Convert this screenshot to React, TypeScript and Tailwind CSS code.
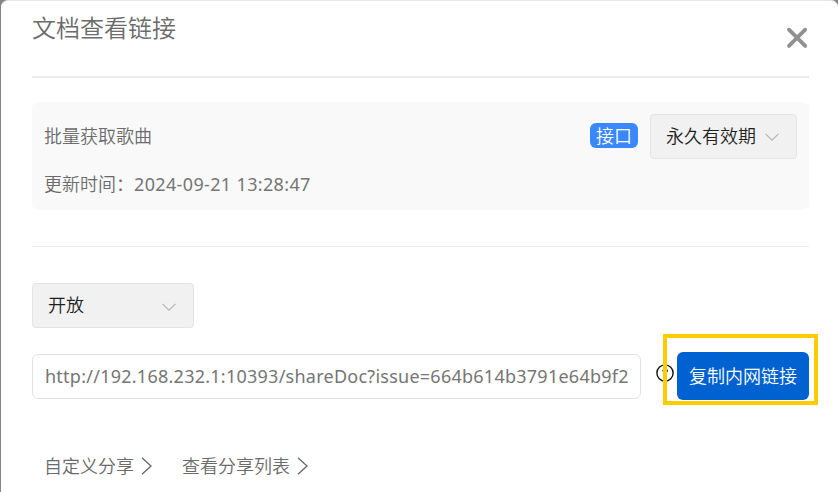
import React from "react";

function Chevron({ className = "" }: { className?: string }) {
  return (
    <svg className={`h-2 w-3.5 shrink-0 ${className}`} viewBox="0 0 14 8" fill="none" stroke="#b4b4b4" strokeWidth="1.1">
      <path d="M.5.8 7 7.2 13.5.8" />
    </svg>
  );
}

function ShareLink({ label }: { label: string }) {
  return (
    <a className="flex h-6 items-center gap-[7px]">
      <span className="leading-6">{label}</span>
      <svg className="h-[18px] w-[12px]" viewBox="0 0 12 18" fill="none" stroke="#666" strokeWidth="1.3">
        <path d="M1 .8 10 9 1 17.2" />
      </svg>
    </a>
  );
}

export default function App() {
  return (
    <div className="h-[492px] w-[838px] overflow-hidden bg-[#858585] pl-px font-['Noto_Sans','Noto_Sans_CJK_SC',sans-serif] text-[18px] font-[350] text-[#6b6b6b]">
      <div className="flex h-[510px] flex-col rounded-[7px] border-t border-[#e8e8e8] bg-white pr-[29px] pl-[31px]">
        <header className="flex h-[77px] shrink-0 justify-between border-b-2 border-[#ebebeb]">
          <h1 className="mt-[9px] h-9 text-[24px] leading-9">文档查看链接</h1>
          <button aria-label="关闭" className="mt-[26px] mr-[1px] h-[22px] w-[22px]">
            <svg viewBox="0 0 22 22" fill="none" stroke="#909090" strokeWidth="3.8" strokeLinecap="round">
              <path d="m3 2.7 16.2 16.2M19.2 2.7 3 18.9" />
            </svg>
          </button>
        </header>

        <section className="mt-6 flex h-[108px] shrink-0 flex-col rounded-md bg-[#f9f9f9] px-3 pt-3">
          <div className="flex h-[45px] items-center">
            <span className="-mt-0.5 leading-6">批量获取歌曲</span>
            <span className="-mt-0.5 mr-3 ml-auto flex h-[25px] w-12 items-center justify-center rounded-md bg-[#3a87ff] leading-none text-white">接口</span>
            <button className="flex h-[45px] w-[147px] items-center rounded border border-[#e4e4e4] bg-[#f1f1f1] pl-[15px] text-[#1f1f1f]">
              <span>永久有效期</span>
              <Chevron className="mt-px ml-[9px]" />
            </button>
          </div>
          <div className="mt-[11px] flex h-7 items-center leading-7">
            <span>更新时间：</span>
            <span className="font-normal tracking-[0.35px] text-[#757575]">2024-09-21 13:28:47</span>
          </div>
        </section>

        <hr className="mt-9 shrink-0 border-[#ebebeb]" />

        <button className="mt-9 flex h-[45px] w-[162px] shrink-0 items-center justify-between rounded border border-[#e4e4e4] bg-[#f1f1f1] pr-[17px] pl-[15px] text-[#1f1f1f]">
          <span>开放</span>
          <Chevron className="mt-[3px]" />
        </button>

        <div className="mt-6 flex h-12 shrink-0 items-center">
          <div className="flex h-[45px] w-[609px] items-center overflow-hidden rounded-md border border-[#e2e2e2] pl-3 font-normal tracking-[0.25px] whitespace-nowrap text-[#757575]">
            http://192.168.232.1:10393/shareDoc?issue=664b614b3791e64b9f2
          </div>
          <svg className="-mt-[7px] ml-[15px] h-[18px] w-[18px]" viewBox="0 0 18 18" fill="none" stroke="#111" strokeWidth="1.4">
            <circle cx="9" cy="9" r="8.1" />
            <path d="M6.7 7.2c0-3.2 4.8-3.1 4.8-.5 0 1.7-2.2 1.8-2.2 3.6" strokeWidth="1" />
            <path d="M9.2 12v1.3" strokeWidth="1" />
          </svg>
          <div className="relative ml-[3px]">
            <button className="flex h-12 w-[132px] items-center justify-center rounded-md bg-[#0062d1] text-white">复制内网链接</button>
            <div className="pointer-events-none absolute -top-[18px] -left-[14px] h-[71px] w-[155px] border-4 border-[#ffcc00]" />
          </div>
        </div>

        <nav className="mt-[54px] flex gap-[29px] pl-3">
          <ShareLink label="自定义分享" />
          <ShareLink label="查看分享列表" />
        </nav>
      </div>
    </div>
  );
}
